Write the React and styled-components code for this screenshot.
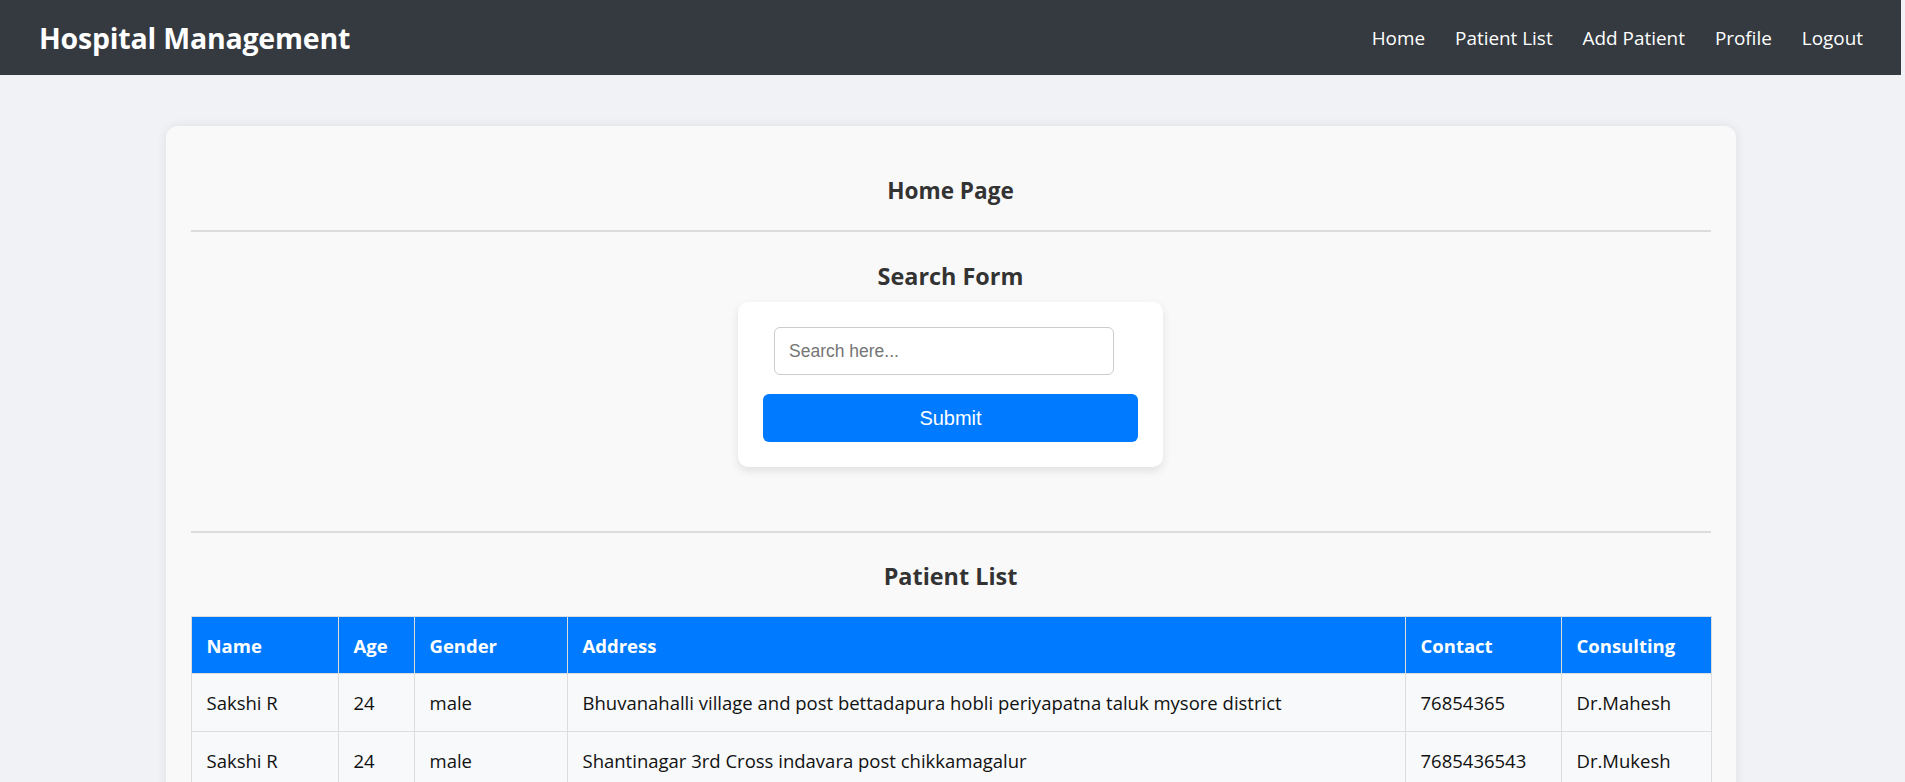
import React from 'react'
import styled, { createGlobalStyle } from 'styled-components'

const GlobalStyle = createGlobalStyle`
    html, body {
        margin:0;
        padding:0;
        background:#f0f2f5;
        font-family:"Open Sans", "Noto Sans", sans-serif;
    }
    * { box-sizing:border-box; }
`

const Page = styled.div`
    width:calc(100% - 4px);
`

const NavBar = styled.nav`
    display:flex;
    align-items:center;
    justify-content:space-between;
    height:75px;
    padding:0 38px 0 39px;
    background:#343a40;
    color:white;
`
const Brand = styled.div`
    font-size:28.5px;
    font-weight:700;
    letter-spacing:-0.2px;
`
const NavLinks = styled.div`
    display:flex;
    gap:30px;
`
const NavLink = styled.a`
    color:white;
    font-size:18.9px;
    text-decoration:none;
    cursor:pointer;
`

const Card = styled.main`
    width:1570px;
    margin:51px auto 40px;
    padding:25px;
    background:#f9f9f9;
    border-radius:12px;
    box-shadow:0 0 12px rgba(0,0,0,0.08);
`
const Heading = styled.h2`
    margin:${p => p.$margin || '0'};
    font-size:${p => p.$size || 23}px;
    line-height:30px;
    font-weight:700;
    text-align:center;
    color:#333;
`
const Rule = styled.hr`
    margin:${p => p.$margin || '0'};
    border:none;
    border-top:2px solid #dcdcdc;
`

const SearchBox = styled.form`
    width:425px;
    margin:0 auto;
    padding:25px;
    background:white;
    border-radius:10px;
    box-shadow:0 4px 10px rgba(0,0,0,0.1);
`
const SearchInput = styled.input`
    display:block;
    width:340px;
    height:48px;
    margin:0 0 19px 11px;
    padding:0 14px;
    border:1px solid #ccc;
    border-radius:6px;
    font-family:"Liberation Sans", Arial, sans-serif;
    font-size:17.5px;
    color:#333;
    outline:none;
    &::placeholder { color:#757575; }
`
const SubmitButton = styled.button`
    display:block;
    width:100%;
    height:48px;
    border:none;
    border-radius:6px;
    background:#007bff;
    color:white;
    font-family:"Liberation Sans", Arial, sans-serif;
    font-size:20px;
    cursor:pointer;
`

const Table = styled.table`
    width:100%;
    border-collapse:collapse;
    table-layout:fixed;
    font-size:18.5px;
`
const Th = styled.th`
    height:57px;
    padding:0 15px;
    background:#007bff;
    color:white;
    font-weight:700;
    text-align:left;
    border:1px solid #ddd;
`
const Td = styled.td`
    height:58px;
    padding:0 15px;
    background:#f8f9fa;
    color:#111;
    border:1px solid #ddd;
    white-space:nowrap;
`

const columns = [
    { key: 'name', label: 'Name', width: 147 },
    { key: 'age', label: 'Age', width: 76 },
    { key: 'gender', label: 'Gender', width: 153 },
    { key: 'address', label: 'Address', width: 838 },
    { key: 'contact', label: 'Contact', width: 156 },
    { key: 'consulting', label: 'Consulting', width: 150 },
]

const patients = [
    { name: 'Sakshi R', age: 24, gender: 'male', address: 'Bhuvanahalli village and post bettadapura hobli periyapatna taluk mysore district', contact: '76854365', consulting: 'Dr.Mahesh' },
    { name: 'Sakshi R', age: 24, gender: 'male', address: 'Shantinagar 3rd Cross indavara post chikkamagalur', contact: '7685436543', consulting: 'Dr.Mukesh' },
    { name: 'Rahul K', age: 31, gender: 'male', address: 'Vijayanagar 2nd stage mysore', contact: '9845123456', consulting: 'Dr.Mahesh' },
]

const PatientTable = ({ rows }) => (
    <Table>
        <colgroup>
            {columns.map(c => <col key={c.key} style={{ width: c.width }} />)}
        </colgroup>
        <thead>
            <tr>{columns.map(c => <Th key={c.key}>{c.label}</Th>)}</tr>
        </thead>
        <tbody>
            {rows.map((r, i) => (
                <tr key={i}>{columns.map(c => <Td key={c.key}>{r[c.key]}</Td>)}</tr>
            ))}
        </tbody>
    </Table>
)

export default function App() {
    return <Page>
        <GlobalStyle />
        <NavBar>
            <Brand>Hospital Management</Brand>
            <NavLinks>
                {['Home', 'Patient List', 'Add Patient', 'Profile', 'Logout'].map(l => <NavLink key={l}>{l}</NavLink>)}
            </NavLinks>
        </NavBar>
        <Card>
            <Heading $size={22.6} $margin="25px 0 24px">Home Page</Heading>
            <Rule />
            <Heading $size={23.4} $margin="29px 0 11px">Search Form</Heading>
            <SearchBox onSubmit={e => e.preventDefault()}>
                <SearchInput placeholder="Search here..." />
                <SubmitButton type="submit">Submit</SubmitButton>
            </SearchBox>
            <Rule $margin="64px 0 0" />
            <Heading $size={23.4} $margin="28px 0 25px">Patient List</Heading>
            <PatientTable rows={patients} />
        </Card>
    </Page>
}
